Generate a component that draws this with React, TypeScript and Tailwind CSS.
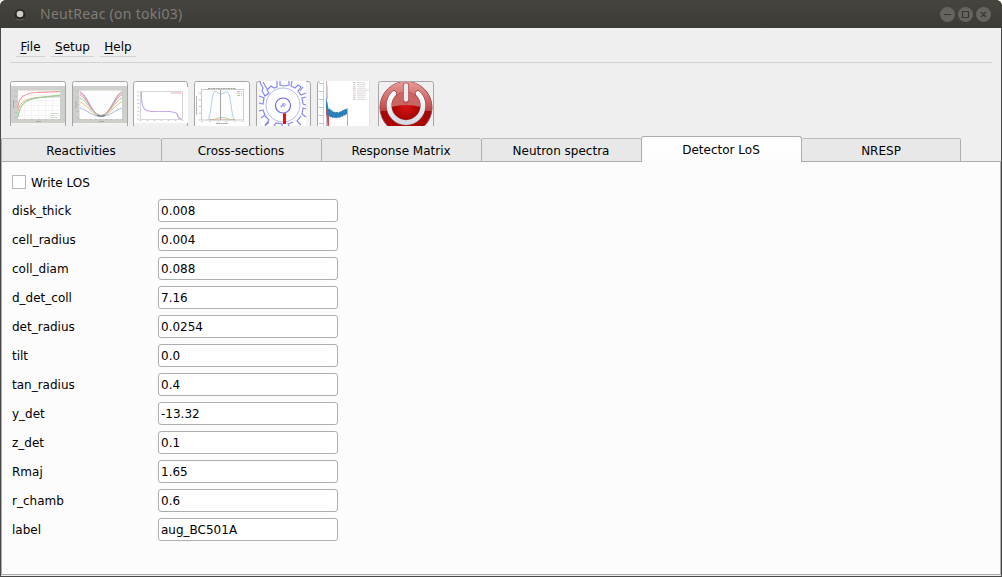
import { useState } from "react";
import type { ReactNode } from "react";

const menus = [
  { label: "File", cls: "w-[29px] mr-[6px]" },
  { label: "Setup", cls: "w-[43px] mr-[6px]" },
  { label: "Help", cls: "w-[36px]" },
];

const tabs = ["Reactivities", "Cross-sections", "Response Matrix", "Neutron spectra", "Detector LoS", "NRESP"];

const initialFields: [string, string][] = [
  ["disk_thick", "0.008"],
  ["cell_radius", "0.004"],
  ["coll_diam", "0.088"],
  ["d_det_coll", "7.16"],
  ["det_radius", "0.0254"],
  ["tilt", "0.0"],
  ["tan_radius", "0.4"],
  ["y_det", "-13.32"],
  ["z_det", "0.1"],
  ["Rmaj", "1.65"],
  ["r_chamb", "0.6"],
  ["label", "aug_BC501A"],
];

function Ticks({ x, y, w, h, nx, ny }: { x: number; y: number; w: number; h: number; nx: number; ny: number }) {
  return (
    <g stroke="#b4b4b4" strokeWidth="0.7">
      {Array.from({ length: nx }, (_, i) => {
        const tx = x + (w * i) / (nx - 1);
        return <path key={"x" + i} d={`M${tx - 0.8} ${y + h + 1.6}h1.6`} />;
      })}
      {Array.from({ length: ny }, (_, i) => {
        const ty = y + (h * i) / (ny - 1);
        return <path key={"y" + i} d={`M${x - 3.4} ${ty}h2.4`} />;
      })}
    </g>
  );
}

function Frame({ children }: { children: ReactNode }) {
  return (
    <svg className="block h-[45px] w-[56px]" viewBox="0 0 56 45" fill="none">
      <path d="M0 45V2.5Q0 0 2.5 0H53.5Q56 0 56 2.5V45Z" fill="#fdfdfd" />
      {children}
      <path d="M.5 45V2.5Q.5 .5 2.5 .5H53.5Q55.5 .5 55.5 2.5V45" stroke="#a6a6a6" />
    </svg>
  );
}

function ReactivityIcon() {
  return (
    <Frame>
      <path d="M1 5h54v37H1z" fill="#cdd0cb" />
      <path d="M1 42h54v3H1z" fill="#f1f1f1" />
      <path d="M8 9.5h42V38H8z" fill="#fdfefd" />
      <path d="M14.5 10v28M21.5 10v28M28.5 10v28M35.5 10v28M42.5 10v28M8 14.5h42M8 19.5h42M8 24.5h42M8 29.5h42M8 34.5h42" stroke="#eeeeee" strokeWidth=".6" />
      <path d="M8 27C8.5 15 15 12.5 26 11.5C36 10.8 43 10.7 50 10.5" stroke="#f3a0a0" strokeWidth="1.2" />
      <path d="M8 30C10 20 17 17.5 28 16.5C37 15.8 44 15.3 50 14.8" stroke="#edb173" />
      <path d="M8 36C10 23 16 18.5 26 17C36 15.8 43 16 50 15.8" stroke="#9dcdc8" strokeWidth=".8" />
      <path d="M8 36C10 22 17 18.5 28 16.8C37 15.5 44 14.8 50 14" stroke="#8fce8f" strokeWidth=".9" />
      <path d="M40 32.5h8M40 34.5h5M40 36.5h7" stroke="#c8d0c0" strokeWidth=".8" />
      <path d="M26 40.5h5M3.5 19v8" stroke="#9d9f9b" strokeWidth=".8" />
      <Ticks x={8} y={10} w={42} h={27} nx={7} ny={6} />
    </Frame>
  );
}

function CrossSectionIcon() {
  const curves: [string, number][] = [
    ["#c9b2e4", 10.5],
    ["#c0929a", 12],
    ["#f0999d", 14],
    ["#98d4a1", 17],
    ["#f6c18f", 21],
    ["#9dc2e0", 27],
  ];
  return (
    <Frame>
      <path d="M1 5h54v37H1z" fill="#cdd0cb" />
      <path d="M1 42h54v3H1z" fill="#f1f1f1" />
      <path d="M7.5 9.5H50V38H7.5z" fill="#fdfdfd" />
      {curves.map(([color, top]) => (
        <path key={color} d={`M8 ${top}C15 ${top + 2} 20 ${34 + top / 20} 29 ${34 + top / 20}C38 ${34 + top / 20} 43 ${top + 2} 50 ${top}`} stroke={color} strokeWidth="1" />
      ))}
      <path d="M25 34.5Q29 36 33 34.5" stroke="#65617e" />
      <path d="M27 40.5h5M4 20v7" stroke="#9d9f9b" strokeWidth=".8" />
      <Ticks x={8} y={10} w={42} h={27} nx={9} ny={5} />
    </Frame>
  );
}

function ResponseIcon() {
  return (
    <svg className="block h-[45px] w-[56px]" viewBox="0 0 56 45" fill="none">
      <path d="M0 2.5Q0 0 2.5 0H52.5Q55 0 55 2.5V45H0z" fill="#fff" />
      <path d="M1 42h54v3H1z" fill="#f1f1f1" />
      <path d="M.5 45V2.5Q.5.5 2.5.5h50Q54.5.5 54.5 2.5V6M54.5 42v3" stroke="#a6a6a6" />
      <path d="M7.5 10.5h42v28h-42z" stroke="#d6d6d6" />
      <path d="M8.5 11C8 25 11 29.5 15 29.8Q18 30.7 22 30.5L37 30.5L41 31.5Q43 31 44.5 34Q45 38 49 38" stroke="#c3b1ef" strokeWidth="1.2" />
      <path d="M17 30.5h6M34 30.5h4M44 33l1 3 3 2" stroke="#d89ed9" strokeWidth=".9" />
      <path d="M38 12h11" stroke="#f3c4c9" strokeWidth="1.3" strokeDasharray="3 .5" />
      <Ticks x={7.5} y={11} w={42} h={27} nx={7} ny={8} />
    </svg>
  );
}

function SpectraIcon() {
  return (
    <Frame>
      <path d="M7.5 8.5h42v30.5h-42z" stroke="#b5b5b5" strokeWidth=".7" />
      <path d="M14 7.5h28" stroke="#999" strokeWidth=".9" strokeDasharray="2 .5" />
      <path d="M14 38.5C17 37 17.5 12 20.5 10.7Q22 9.5 24 12Q27 14.5 30 12Q33 9 35 13.5C37.5 20 37.5 38 41 38.5" stroke="#b0cfea" />
      <path d="M15 38.5H20Q28 34.5 36 38.5H41" stroke="#a6d09c" strokeWidth=".9" />
      <path d="M15 38.7h26" stroke="#e1a18f" strokeWidth=".6" />
      <path d="M26.5 9v30" stroke="#9d9d9d" strokeWidth=".9" />
      <path d="M22 42.5h12" stroke="#999" strokeWidth=".9" strokeDasharray="1.8 .5" />
      <path d="M2.5 15v19" stroke="#aaa" strokeWidth="1" strokeDasharray="1.8 .4" />
      <path d="M43 10.5h3" stroke="#a3c2da" />
      <path d="M43 12.5h3" stroke="#f3bc96" />
      <path d="M43 14.5h3" stroke="#9ed09e" />
      <path d="M47 10.5h1M47 12.5h1M47 14.5h1" stroke="#c4c4c4" />
      <Ticks x={8} y={12} w={41} h={27} nx={6} ny={5} />
    </Frame>
  );
}

function DetectorIcon() {
  return (
    <svg className="block h-[45px] w-[56px]" viewBox="0 0 56 45" fill="none">
      <path d="M0 45V2.5Q0 0 2.5 0H52Q55 0 55 2.5V45z" fill="#f5f5f5" />
      <path d="M.5 45V2.5Q.5.5 2.5.5H52Q54.5.5 54.5 2.5V45" stroke="#a6a6a6" />
      <path d="M5 0h45v45H5z" fill="#fff" />
      <g stroke="#8588ee" strokeWidth="1.2">
        <circle cx="27" cy="24" r="17" stroke="#abadf4" strokeWidth=".9" />
        <circle cx="27" cy="24.5" r="7.5" stroke="#6969ee" strokeWidth="1.2" />
        <path d="M4 1l3 6-1 3 3 5 4-3-2-3 4-4 3 2 3-1V0M24 0v4l4 1 5-1V0M36 0l-1 5 4 2 3-3 3 2-3 4 3 4 5-2M50 16l-4 1 1 6 3 1M50 28l-3-1-1 6 4 3M45 35l-4 5 4 4M37 41l-5 2 1 2M26 45v-2l-6-1-2 3M13 41l-4 4M5 37l4-3-2-5-4 1M3 22l4 1 1-6-5-2M9 35l4 4-4 5M7 1l4 7M47 6l-3 4" />
        <path d="M24 25h2l1-3 1 4 2-3M25 27l4-5" strokeWidth=".7" />
      </g>
      <path d="M27 32.3h3V43h-3z" fill="#ff0505" />
    </svg>
  );
}

function NrespIcon() {
  return (
    <svg className="block h-[45px] w-[56px]" viewBox="0 0 56 45" fill="none">
      <path d="M1 0h52v45H1z" fill="#fff" />
      <path d="M.5 45V2.5Q.5.5 2.5.5" stroke="#a6a6a6" />
      <path d="M6.5 0v45" stroke="#c6c6c6" strokeWidth=".8" />
      <path d="M2 2.5h4M2 10.5h4M2 18.5h4M2 26.5h4M2 34.5h4M2 42.5h4" stroke="#b4b4b4" strokeWidth=".8" />
      <path d="M9.5 0v45" stroke="#c5bbd1" />
      <path d="M9 17l1.5 5 1 6 1.5-.5 1 2 1-.5 1 2 1.5-.5 1 1 1.5-.8 1.5 1 1.5-1.5 1.5.3 1-1.5 1.5.3 1-1.500 1.5.5 1-1.5V34l-1.3-1-1 1.5-1.5-.3-1 1.5-1.5-.3-1.5 1.3-2-.2-1.5.8-2-.8-1.5.5-1-1-1.5.3-2-2.3-2 .3L9 30z" fill="#2d7fb5" />
      <path d="M30.5 33v12" stroke="#92bcd3" />
      <path d="M9.5 29l1 7 .5 9M11.5 34v11" stroke="#ce4c55" strokeWidth="1.2" />
      <path d="M10 4l.5 14" stroke="#e5b5b9" />
      <path d="M52.5 0v45" stroke="#e5e5e5" />
      {["#a0bdd5", "#efc591", "#b7cda5", "#dda1a5", "#cdbcdd", "#e0ccaa", "#e3b4d1", "#b7d6a8", "#e3aead", "#9ed3df"].map((color, i) => (
        <g key={color}>
          <path d={`M36 ${1.5 + i * 1.9}h2.5`} stroke={color} strokeWidth=".9" />
          <path d={`M40 ${1.5 + i * 1.9}h${i === 4 ? 12 : 8 + (i % 2)}`} stroke="#d2d2d2" strokeWidth=".8" />
        </g>
      ))}
    </svg>
  );
}

function PowerIcon() {
  return (
    <svg className="block h-[45px] w-[56px]" viewBox="0 0 56 45" fill="none">
      <defs>
        <linearGradient id="power-red" x2="0" y2="1">
          <stop stopColor="#e6a0a0" /><stop offset=".46" stopColor="#bf5050" /><stop offset=".57" stopColor="#a10707" /><stop offset="1" stopColor="#b90000" />
        </linearGradient>
        <linearGradient id="power-shine" x2="0" y2="1"><stop stopColor="#e89a98" /><stop offset="1" stopColor="#c04a48" /></linearGradient>
        <linearGradient id="power-white" x2="0" y2="1"><stop stopColor="#fff" /><stop offset="1" stopColor="#d4dbe2" /></linearGradient>
        <radialGradient id="power-core"><stop stopColor="#d81414" /><stop offset="1" stopColor="#a30000" /></radialGradient>
      </defs>
      <path d="M0 45V2.5Q0 0 2.5 0h51Q56 0 56 2.5V45z" fill="#f0f0f0" />
      <circle cx="28" cy="26.5" r="26" fill="url(#power-red)" stroke="#984648" />
      <path d="M2.5 26A25.5 25.5 0 0 1 53.5 26Q54 29 53 30H3Q2 29 2.5 26z" fill="url(#power-shine)" opacity=".85" />
      <circle cx="28" cy="26" r="15" fill="url(#power-core)" />
      <path d="M13 26A15 15 0 0 1 43 26Q28 22 13 26z" fill="#cb6563" />
      <path d="M16 12.500A17 17 0 1 0 40 12.5" stroke="#973b3d" strokeWidth="6" strokeLinecap="round" />
      <path d="M16 12.500A17 17 0 1 0 40 12.5" stroke="url(#power-white)" strokeWidth="4.8" strokeLinecap="round" />
      <path d="M28 4.5v15" stroke="#af5357" strokeWidth="6" strokeLinecap="round" />
      <path d="M28 4.5v14" stroke="#e8edf1" strokeWidth="4.3" strokeLinecap="round" />
      <path d="M.5 45V2.5Q.5.5 2.5.5h51Q55.5.5 55.5 2.5V45" stroke="#a6a6a6" />
    </svg>
  );
}

const tools = [
  { Icon: ReactivityIcon, gap: "mr-[6px]" },
  { Icon: CrossSectionIcon, gap: "mr-[5px]" },
  { Icon: ResponseIcon, gap: "mr-[5px]" },
  { Icon: SpectraIcon, gap: "mr-[6px]" },
  { Icon: DetectorIcon, gap: "mr-[5px]" },
  { Icon: NrespIcon, gap: "mr-[5px]" },
  { Icon: PowerIcon, gap: "" },
];

function tabClass(i: number, active: number) {
  if (i === active) return "h-[26px] w-[161px] rounded-t-[3px] border-x border-t bg-linear-to-b from-white to-[#fcfcfc] pr-[1px] leading-[26px]";
  const shape = "h-[24px] rounded-t-[2px] border-b border-t border-t-[#bbbbbb] bg-[#e8e8e8] leading-[24px]";
  return i < active ? `${shape} w-[160px] border-l pr-[1px]` : `${shape} w-[159px] border-r`;
}

export default function App() {
  const [active, setActive] = useState(4);
  const [writeLos, setWriteLos] = useState(false);
  const [fields, setFields] = useState(initialFields);

  return (
    <div className="h-[577px] w-[1002px] bg-white">
      <div className="flex h-full flex-col overflow-hidden rounded-t-[6px] bg-[#484848] text-[12px] text-black [font-family:'DejaVu_Sans',sans-serif]">
        <header className="flex h-[28px] shrink-0 items-center bg-linear-to-b from-[#45443f] to-[#3c3b37] pl-[13px] pr-[10px]">
          <svg className="h-[14px] w-[14px]" viewBox="0 0 14 14">
            <circle cx="7" cy="7.5" r="5.5" fill="#292925" />
            <path d="M3 12q4 2 8 0" stroke="#65645f" fill="none" />
            <circle cx="7" cy="7" r="3.3" fill="#d0ccc7" />
          </svg>
          <h1 className="ml-[13px] flex-1 text-[14px] leading-[28px] tracking-[0.28px] text-[#7f7d77] [font-family:'Noto_Sans',sans-serif]">NeutReac (on toki03)</h1>
          <svg className="mt-[1px] h-[16px] w-[52px]" viewBox="0 0 52 16" fill="none">
            <g fill="#65645e"><circle cx="7.5" cy="7.5" r="7.5" /><circle cx="25.5" cy="7.5" r="7.5" /><circle cx="43.5" cy="7.5" r="7.5" /></g>
            <path d="M4 7.5h7M22.5 4.5h6v6h-6zM41 5l5 5M46 5l-5 5" stroke="#383733" strokeWidth="1.2" />
          </svg>
        </header>
        <main className="mx-px mb-px flex min-h-0 flex-1 flex-col bg-[#efefef]">
          <nav className="ml-[9px] mr-[9px] flex h-[35px] shrink-0 border-b border-[#d3d3d3] pl-[6px]">
            {menus.map((menu) => (
              <button key={menu.label} className={`mt-[9px] h-[20px] shrink-0 border-b border-[#d3d3d3] text-center leading-[21px] ${menu.cls}`}>
                <span className="underline underline-offset-2">{menu.label[0]}</span>{menu.label.slice(1)}
              </button>
            ))}
          </nav>
          <div className="ml-[9px] mt-[18px] flex h-[45px] shrink-0">
            {tools.map(({ Icon, gap }, i) => <button key={i} className={`h-[45px] w-[56px] shrink-0 ${gap}`}><Icon /></button>)}
          </div>
          <div className="mt-[10px] flex h-[26px] shrink-0 items-end">
            {tabs.map((tab, i) => (
              <button key={tab} onClick={() => setActive(i)} className={`shrink-0 border-[#adadad] text-center ${tabClass(i, active)}`}>
                {tab}
              </button>
            ))}
            <span className="h-px flex-1 bg-[#adadad]" />
          </div>
          <section className="mb-px min-h-0 flex-1 border-x border-b border-[#adadad] bg-[#fcfcfc] pl-[10px] pt-[13px]">
            <label className="flex h-[14px] items-center gap-[5px]">
              <input type="checkbox" checked={writeLos} onChange={(e) => setWriteLos(e.target.checked)} className="h-[14px] w-[14px] appearance-none border border-[#b8b8b8] bg-white checked:bg-[#777777]" />
              <span className="pt-[2px] leading-[14px]">Write LOS</span>
            </label>
            <div className="mt-[10px] flex flex-col gap-[6px]">
              {fields.map(([name, value], i) => (
                <label key={name} className="flex h-[23px] items-center">
                  <span className="w-[146px] pt-[2px] leading-[23px]">{name}</span>
                  <input
                    value={value}
                    onChange={(e) => setFields(fields.map((f, j) => (j === i ? [name, e.target.value] : f)))}
                    className="h-[23px] w-[180px] rounded-[3px] border border-[#adadad] bg-white px-[2px] outline-none"
                  />
                </label>
              ))}
            </div>
          </section>
        </main>
      </div>
    </div>
  );
}
